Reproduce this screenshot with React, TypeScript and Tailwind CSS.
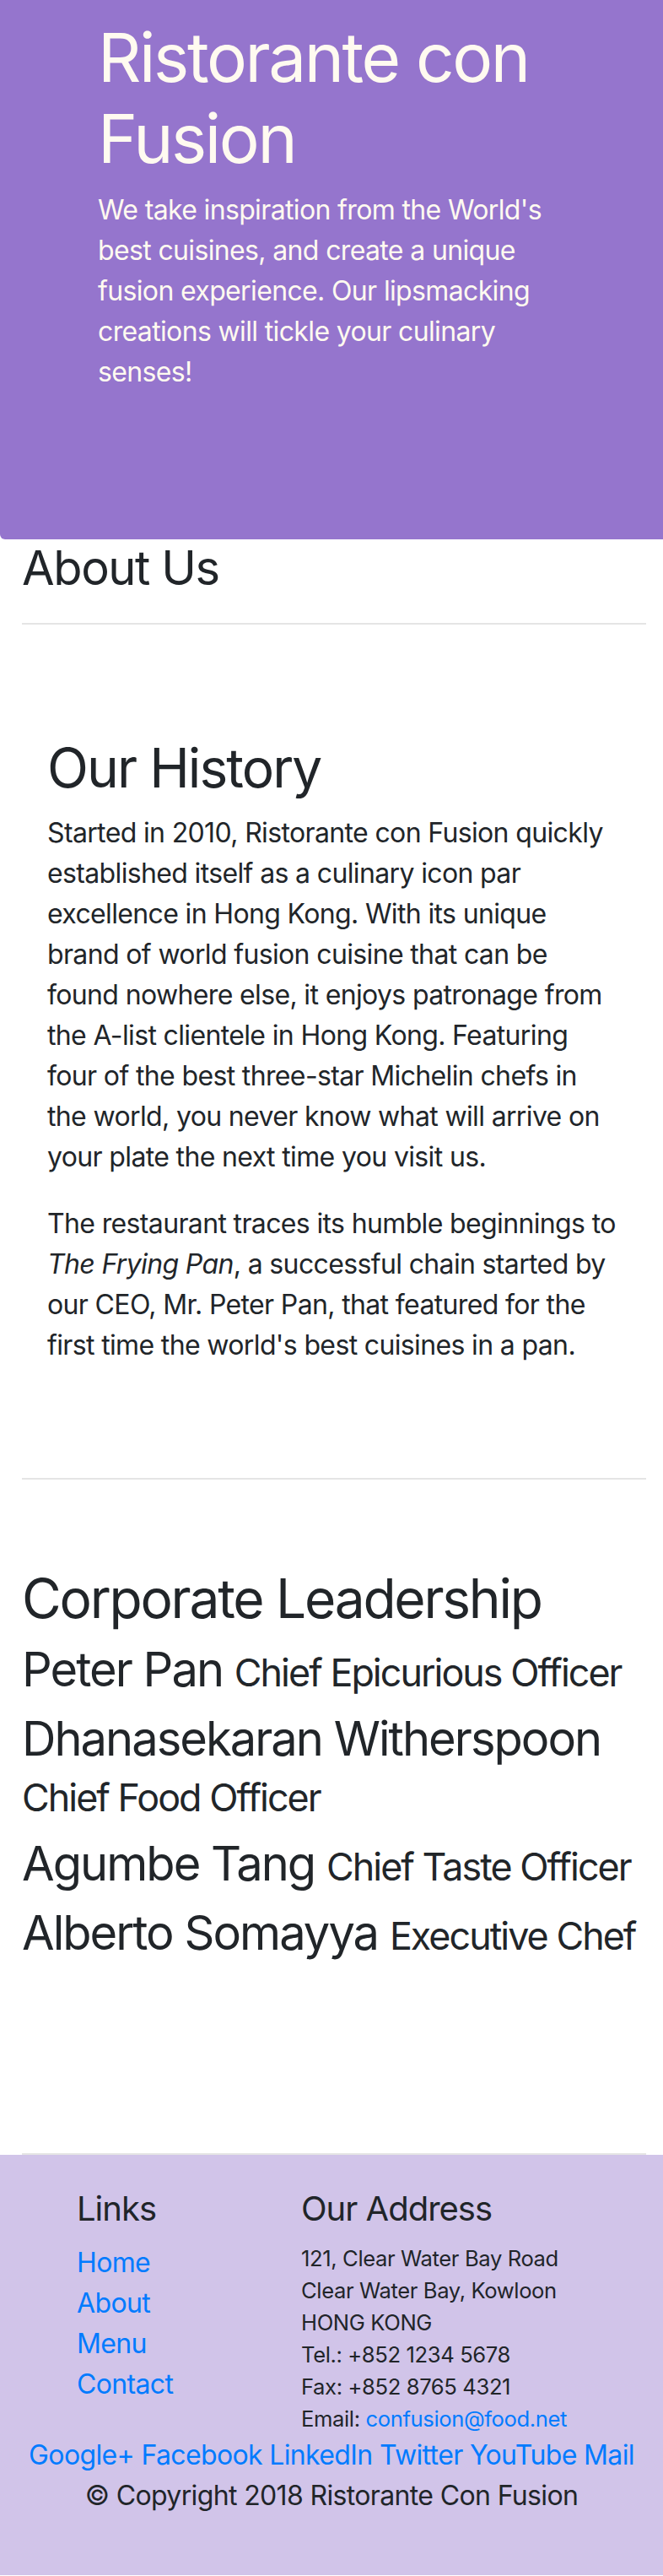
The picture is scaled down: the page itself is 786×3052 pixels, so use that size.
const leaders = [
  { name: "Peter Pan", role: "Chief Epicurious Officer" },
  { name: "Dhanasekaran Witherspoon", role: "Chief Food Officer" },
  { name: "Agumbe Tang", role: "Chief Taste Officer" },
  { name: "Alberto Somayya", role: "Executive Chef" },
];

const links = ["Home", "About", "Menu", "Contact"];
const social = ["Google+", "Facebook", "LinkedIn", "Twitter", "YouTube", "Mail"];

export default function App() {
  return (
    <div className="w-[786px] font-['Inter','Noto_Sans',sans-serif] text-[#212529]">
      {/* jumbotron */}
      <header className="h-[639px] rounded-bl-[6px] bg-[#9575CD] pl-[116px] pr-[116px] pt-[20px] text-[#FFFAF0]">
        <h1 className="text-[80px] font-normal leading-[96px] tracking-[-0.03em]">Ristorante con Fusion</h1>
        <p className="mt-[13px] text-[32px] leading-[48px] tracking-[-0.02em]">
          We take inspiration from the World's best cuisines, and create a unique fusion experience. Our lipsmacking
          creations will tickle your culinary senses!
        </p>
      </header>

      <main className="pl-[26px] pr-[20px]">
        <h3 className="pt-[1px] text-[56px] leading-[67px] tracking-[-0.025em]">About Us</h3>
        <hr className="mt-[31px] h-[2px] border-0 bg-black/10" />

        <section className="pl-[30px] pr-[34px] pt-[131px]">
          <h2 className="text-[64px] leading-[77px] tracking-[-0.03em]">Our History</h2>
          <p className="mt-[15px] text-[32px] leading-[48px] tracking-[-0.02em]">
            Started in 2010, Ristorante con Fusion quickly established itself as a culinary icon par excellence in Hong
            Kong. With its unique brand of world fusion cuisine that can be found nowhere else, it enjoys patronage from
            the A-list clientele in Hong Kong. Featuring four of the best three-star Michelin chefs in the world, you
            never know what will arrive on your plate the next time you visit us.
          </p>
          <p className="mt-[31px] text-[32px] leading-[48px] tracking-[-0.02em]">
            The restaurant traces its humble beginnings to <em>The Frying Pan</em>, a successful chain started by our
            CEO, Mr. Peter Pan, that featured for the first time the world's best cuisines in a pan.
          </p>
        </section>
        <hr className="mt-[133px] h-[2px] border-0 bg-black/10" />

        <section className="pt-[102px]">
          <h2 className="text-[64px] leading-[77px] tracking-[-0.035em]">Corporate Leadership</h2>
          <div className="mt-[13px] flex flex-col gap-[16px]">
            {leaders.map((l) => (
              <h3 key={l.name} className="text-[56px] leading-[1.18] tracking-[-0.035em]">
                {l.name} <span className="text-[44.8px]">{l.role}</span>
              </h3>
            ))}
          </div>
        </section>
        <hr className="mt-[228px] h-[2px] border-0 bg-black/10" />
      </main>

      <footer className="h-[498px] bg-[#D1C4E9] pt-[40px]">
        <div className="flex">
          <div className="w-[357px] pl-[91px]">
            <h5 className="text-[40px] leading-[48px] tracking-[-0.025em]">Links</h5>
            <ul className="mt-[16px]">
              {links.map((l) => (
                <li key={l} className="text-[32px] leading-[48px] tracking-[-0.02em]">
                  <a href="#" className="text-[#007bff]">
                    {l}
                  </a>
                </li>
              ))}
            </ul>
          </div>
          <div>
            <h5 className="text-[40px] leading-[48px] tracking-[-0.025em]">Our Address</h5>
            <address className="mt-[16px] text-[25.6px] not-italic leading-[38px] tracking-[-0.015em]">
              121, Clear Water Bay Road
              <br />
              Clear Water Bay, Kowloon
              <br />
              HONG KONG
              <br />
              Tel.: +852 1234 5678
              <br />
              Fax: +852 8765 4321
              <br />
              Email:{" "}
              <a href="#" className="text-[#007bff]">
                confusion@food.net
              </a>
            </address>
          </div>
        </div>
        <div className="text-center text-[32px] leading-[48px] tracking-[-0.02em]">
          {social.map((s, i) => (
            <span key={s}>
              <a href="#" className="text-[#007bff]">
                {s}
              </a>
              {i < social.length - 1 ? " " : ""}
            </span>
          ))}
        </div>
        <p className="text-center text-[32px] leading-[48px] tracking-[-0.02em]">
          © Copyright 2018 Ristorante Con Fusion
        </p>
      </footer>
    </div>
  );
}
